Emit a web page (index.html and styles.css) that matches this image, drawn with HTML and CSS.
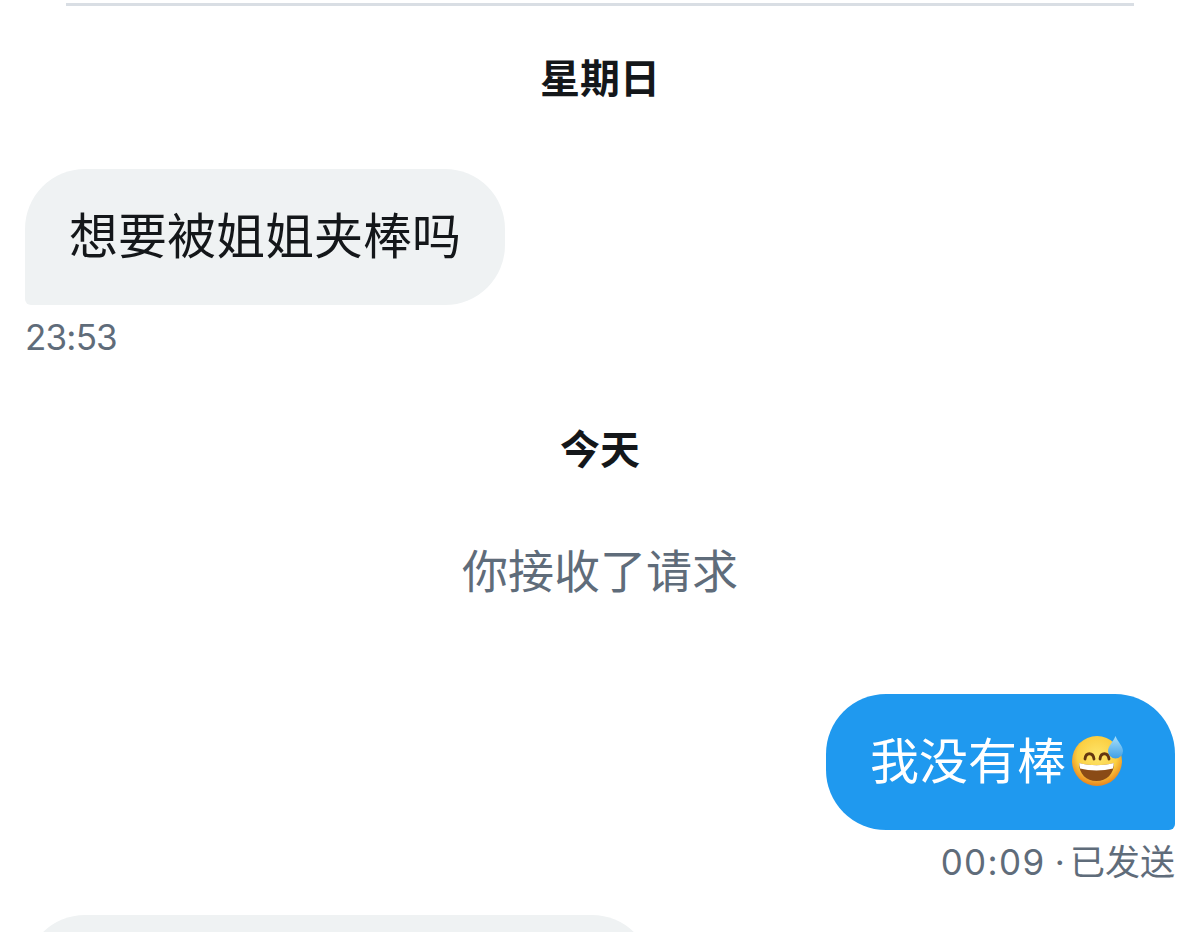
FILE: index.html
```html
<!DOCTYPE html>
<html lang="zh-CN">
<head>
    <meta name="viewport" content="width=device-width, initial-scale=1">
    <meta charset="UTF-8">
    <title>私信</title>
    <link rel="stylesheet" href="styles.css">
</head>
<body>
    <div class="divider"></div>

    <h2 class="day day-first">星期日</h2>

    <div class="msg msg-in">
        <div class="bubble">想要被姐姐夹棒吗</div>
        <div class="time">23:53</div>
    </div>

    <h2 class="day day-today">今天</h2>
    <p class="notice">你接收了请求</p>

    <div class="msg msg-out">
        <div class="bubble">我没有棒<svg class="emoji" viewBox="0 0 52 52" aria-hidden="true">
            <defs>
                <radialGradient id="face" cx="50%" cy="40%" r="58%">
                    <stop offset="0%" stop-color="#fde56c"/>
                    <stop offset="68%" stop-color="#fbcf42"/>
                    <stop offset="100%" stop-color="#ea8a1e"/>
                </radialGradient>
                <linearGradient id="drop" x1="0" y1="0" x2="0" y2="1">
                    <stop offset="0%" stop-color="#a8e0fa"/>
                    <stop offset="100%" stop-color="#3f9fe6"/>
                </linearGradient>
            </defs>
            <circle cx="26" cy="26" r="25" fill="url(#face)"/>
            <path d="M14 24c.8-7 8-7 9 0" fill="none" stroke="#633610" stroke-width="2.800" stroke-linecap="round"/>
            <path d="M29 24c.8-7 8-7 9 0" fill="none" stroke="#633610" stroke-width="2.800" stroke-linecap="round"/>
            <path d="M8 28c11 3 24 3 35 0 0 11-7.500 18-17.500 18S8 39 8 28z" fill="#8a4b16"/>
            <path d="M8.200 28c11 3 23.600 3 34.600 0 0 2-.3 3.800-.9 5.500-9.800 2.600-23 2.600-32.800 0-.6-1.700-.9-3.500-.9-5.500z" fill="#fff"/>
            <path d="M44.500 1c2 5.500 7.500 10 7.500 15a7.500 7.500 0 0 1-15 0c0-5 5.500-9.500 7.500-15z" fill="url(#drop)"/>
        </svg></div>
        <div class="time"><span class="clock">00:09</span> ·<span class="status">已发送</span></div>
    </div>

    <div class="msg msg-in">
        <div class="bubble bubble-cut"></div>
    </div>
</body>
</html>
```

FILE: styles.css
```css
html, body {
    height: 932px;
    overflow: hidden;
}

body {
    margin: 0;
    padding: 3px 25px 0;
    box-sizing: border-box;
    background-color: #fff;
    color: #14171a;
    font-family: "Liberation Sans", "Noto Sans CJK SC", sans-serif;
}

.divider {
    height: 3px;
    margin: 0 41px;
    background-color: #d9dee4;
}

.day {
    margin: 0;
    font-size: 40px;
    line-height: 48px;
    font-weight: 700;
    text-align: center;
}

.day-first {
    margin-top: 49px;
}

.day-today {
    margin-top: 69px;
}

.notice {
    margin: 70px 0 0;
    color: #5f6c7a;
    font-size: 46px;
    line-height: 56px;
    text-align: center;
}

.msg {
    display: flex;
    flex-direction: column;
}

.msg-in {
    align-items: flex-start;
    margin-top: 66px;
}

.msg-out {
    align-items: flex-end;
    margin-top: 94px;
}

.msg-out + .msg-in {
    margin-top: 33px;
}

.bubble {
    display: flex;
    align-items: center;
    height: 136px;
    box-sizing: border-box;
    padding: 0 44px;
    border-radius: 60px;
    background-color: #eff2f3;
    font-size: 49px;
    line-height: 60px;
}

.msg-in .bubble {
    border-bottom-left-radius: 6px;
}

.msg-out .bubble {
    border-bottom-right-radius: 6px;
    background-color: #1f99ef;
    color: #fff;
    padding: 0 52px 0 44px;
}

.bubble-cut {
    width: 627px;
}

.emoji {
    width: 52px;
    height: 52px;
    margin-left: 5px;
    margin-top: -2px;
}

.time {
    margin-top: 12px;
    color: #5f6c7a;
    font-family: Inter, "Noto Sans CJK SC", sans-serif;
    font-size: 35px;
    line-height: 40px;
    letter-spacing: -0.8px;
}

.clock {
    letter-spacing: 1.4px;
}

.status {
    margin-left: 6px;
    letter-spacing: 0;
}
```
